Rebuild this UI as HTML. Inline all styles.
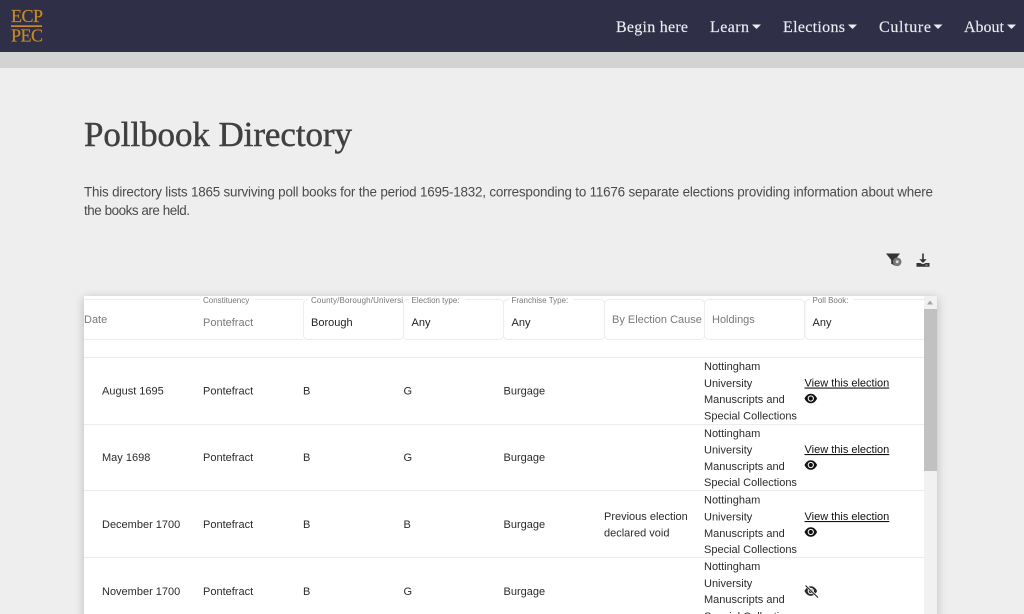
<!DOCTYPE html>
<html lang="en">
<head>
<meta charset="utf-8">
<title>Pollbook Directory</title>
<style>
html,body{margin:0;padding:0;width:1024px;height:614px;overflow:hidden;background:#eee}
svg{display:block;position:absolute;left:0;top:0}
text{white-space:pre}
.nav{font-family:"Liberation Serif",serif;font-size:16px;fill:#ececf0;stroke:#ececf0;stroke-width:.15}
.p{font-family:"Liberation Sans",sans-serif;font-size:13.4px;fill:#4a4a4a}
.t{font-family:"Liberation Sans",sans-serif;font-size:11px;fill:#2b2b2b}
.h{font-family:"Liberation Sans",sans-serif;font-size:11px;fill:#7a7a7a}
.v{font-family:"Liberation Sans",sans-serif;font-size:11px;fill:#222}
.l{font-family:"Liberation Sans",sans-serif;font-size:8px;fill:#777}
.a{font-family:"Liberation Sans",sans-serif;font-size:11px;fill:#111;text-decoration:underline}
.logo{font-family:"Liberation Serif",serif;font-size:18px;fill:#c88a26;stroke:#c88a26;stroke-width:.2}
</style>
</head>
<body>
<svg width="1024" height="614" viewBox="0 0 1024 614" xmlns="http://www.w3.org/2000/svg">
<defs>
<filter id="sh" x="-5%" y="-5%" width="110%" height="115%"><feGaussianBlur stdDeviation="5"/></filter>
<g id="eye">
<path d="M0 5C1.500 1.800 3.700 .2 6.300 .2S11.100 1.800 12.600 5C11.100 8.200 8.900 9.800 6.300 9.800S1.500 8.200 0 5z" fill="#111"/>
<circle cx="6.300" cy="5" r="3.100" fill="#fff"/>
<circle cx="6.300" cy="5" r="2.100" fill="#111"/>
</g>
</defs>
<rect width="1024" height="614" fill="#eeeeee"/>
<rect y="52" width="1024" height="16" fill="#d3d3d3"/>
<rect width="1024" height="52" fill="#2f3047"/>

<text class="logo" x="11" y="22" textLength="32">ECP</text>
<rect x="11" y="25.3" width="31" height="1.7" fill="#c88a26"/>
<text class="logo" x="11" y="41.5" textLength="32">PEC</text>

<text class="nav" x="616" y="32" textLength="72">Begin here</text>
<text class="nav" x="710" y="32" textLength="39">Learn</text>
<path d="M752 24.500h9l-4.500 4.500z" fill="#ececf0"/>
<text class="nav" x="783" y="32" textLength="62">Elections</text>
<path d="M848 24.500h9l-4.500 4.500z" fill="#ececf0"/>
<text class="nav" x="879" y="32" textLength="52">Culture</text>
<path d="M933.500 24.500h9l-4.500 4.500z" fill="#ececf0"/>
<text class="nav" x="964" y="32" textLength="40">About</text>
<path d="M1007 24.500h9l-4.500 4.500z" fill="#ececf0"/>

<text x="84" y="146" font-family="Liberation Serif, serif" font-size="35" fill="#404040" stroke="#404040" stroke-width=".45" textLength="268">Pollbook Directory</text>
<text class="p" x="84" y="196.500" textLength="849">This directory lists 1865 surviving poll books for the period 1695-1832, corresponding to 11676 separate elections providing information about where</text>
<text class="p" x="84" y="215" textLength="106">the books are held.</text>

<!-- toolbar icons -->
<path d="M886 253.500h14l-5 6.500v5.800l-3.800-2.200v-3.600z" fill="#333"/>
<circle cx="897.200" cy="261.800" r="4.300" fill="#777"/>
<circle cx="897.200" cy="261.800" r="1.500" fill="#ddd"/>
<path d="M922.200 253.500h1.600v5.800h2.900l-3.700 3.700-3.700-3.700h2.900z" fill="#333"/>
<path d="M916.500 263h3.700l2.800 1.200 2.800-1.200h3.700v3.800h-13z" fill="#333"/>
<rect x="925.500" y="264.600" width="2" height="1" fill="#ccc"/>

<!-- table card -->
<rect x="84" y="298" width="853" height="330" fill="#000" opacity=".22" filter="url(#sh)"/>
<rect x="84" y="296" width="853" height="330" fill="#fff"/>
<rect x="924" y="296" width="13" height="318" fill="#f1f1f1"/>
<rect x="924" y="309" width="13" height="162" fill="#c1c1c1"/>
<path d="M927 304.500h6l-3-4z" fill="#a3a3a3"/>

<!-- header fields -->
<g fill="none" stroke="#ececec" stroke-width="1">
<path d="M84 299.500H303.500M84 339.500H303.500"/>
<rect x="303.500" y="299.500" width="100" height="40" rx="4"/>
<rect x="403.500" y="299.500" width="100" height="40" rx="4"/>
<rect x="503.500" y="299.500" width="101" height="40" rx="4"/>
<rect x="604.500" y="299.500" width="100" height="40" rx="4"/>
<rect x="704.500" y="299.500" width="100" height="40" rx="4"/>
<path d="M924 299.500H809a4 4 0 0 0-4 4V335.500a4 4 0 0 0 4 4H924"/>
</g>
<g fill="#fff">
<rect x="200" y="297" width="55" height="5"/>
<rect x="308" y="297" width="96" height="5"/>
<rect x="409" y="297" width="56" height="5"/>
<rect x="509" y="297" width="65" height="5"/>
<rect x="810" y="297" width="44" height="5"/>
</g>
<text class="l" x="203" y="303">Constituency</text>
<text class="l" x="311" y="303" textLength="92">County/Borough/Universi</text>
<text class="l" x="411.500" y="303">Election type:</text>
<text class="l" x="511.500" y="303">Franchise Type:</text>
<text class="l" x="812.500" y="303">Poll Book:</text>

<text class="h" x="84" y="323">Date</text>
<text class="h" x="203" y="326">Pontefract</text>
<text class="v" x="311" y="326">Borough</text>
<text class="v" x="411.500" y="326">Any</text>
<text class="v" x="511.500" y="326">Any</text>
<text class="h" x="612" y="323">By Election Cause</text>
<text class="h" x="712" y="323">Holdings</text>
<text class="v" x="812.500" y="326">Any</text>

<!-- row lines -->
<g stroke="#ececec" stroke-width="1">
<path d="M84 357.500H924M84 424.500H924M84 490.500H924M84 557.500H924"/>
</g>

<!-- row 1 -->
<text class="t" x="102" y="394.500">August 1695</text>
<text class="t" x="203" y="394.500">Pontefract</text>
<text class="t" x="303" y="394.500">B</text>
<text class="t" x="403.500" y="394.500">G</text>
<text class="t" x="503.500" y="394.500">Burgage</text>
<text class="t" x="704" y="370">Nottingham</text>
<text class="t" x="704" y="387">University</text>
<text class="t" x="704" y="403">Manuscripts and</text>
<text class="t" x="704" y="419.500">Special Collections</text>
<text class="a" x="804.500" y="386.500">View this election</text>
<use href="#eye" x="804.500" y="393.500"/>

<!-- row 2 -->
<text class="t" x="102" y="461">May 1698</text>
<text class="t" x="203" y="461">Pontefract</text>
<text class="t" x="303" y="461">B</text>
<text class="t" x="403.500" y="461">G</text>
<text class="t" x="503.500" y="461">Burgage</text>
<text class="t" x="704" y="437">Nottingham</text>
<text class="t" x="704" y="453.500">University</text>
<text class="t" x="704" y="470">Manuscripts and</text>
<text class="t" x="704" y="486">Special Collections</text>
<text class="a" x="804.500" y="453">View this election</text>
<use href="#eye" x="804.500" y="460"/>

<!-- row 3 -->
<text class="t" x="102" y="528">December 1700</text>
<text class="t" x="203" y="528">Pontefract</text>
<text class="t" x="303" y="528">B</text>
<text class="t" x="403.500" y="528">B</text>
<text class="t" x="503.500" y="528">Burgage</text>
<text class="t" x="604" y="520">Previous election</text>
<text class="t" x="604" y="536.500">declared void</text>
<text class="t" x="704" y="503.500">Nottingham</text>
<text class="t" x="704" y="520.500">University</text>
<text class="t" x="704" y="537">Manuscripts and</text>
<text class="t" x="704" y="553">Special Collections</text>
<text class="a" x="804.500" y="520">View this election</text>
<use href="#eye" x="804.500" y="527"/>

<!-- row 4 -->
<text class="t" x="102" y="595">November 1700</text>
<text class="t" x="203" y="595">Pontefract</text>
<text class="t" x="303" y="595">B</text>
<text class="t" x="403.500" y="595">G</text>
<text class="t" x="503.500" y="595">Burgage</text>
<text class="t" x="704" y="570">Nottingham</text>
<text class="t" x="704" y="587">University</text>
<text class="t" x="704" y="603">Manuscripts and</text>
<text class="t" x="704" y="620">Special Collections</text>
<use href="#eye" x="804.500" y="586" opacity=".9"/>
<path d="M806 585.500L817.500 597" stroke="#fff" stroke-width="2.400"/>
<path d="M805.500 585.500L818 597.500" stroke="#222" stroke-width="1.100"/>
</svg>
</body>
</html>
